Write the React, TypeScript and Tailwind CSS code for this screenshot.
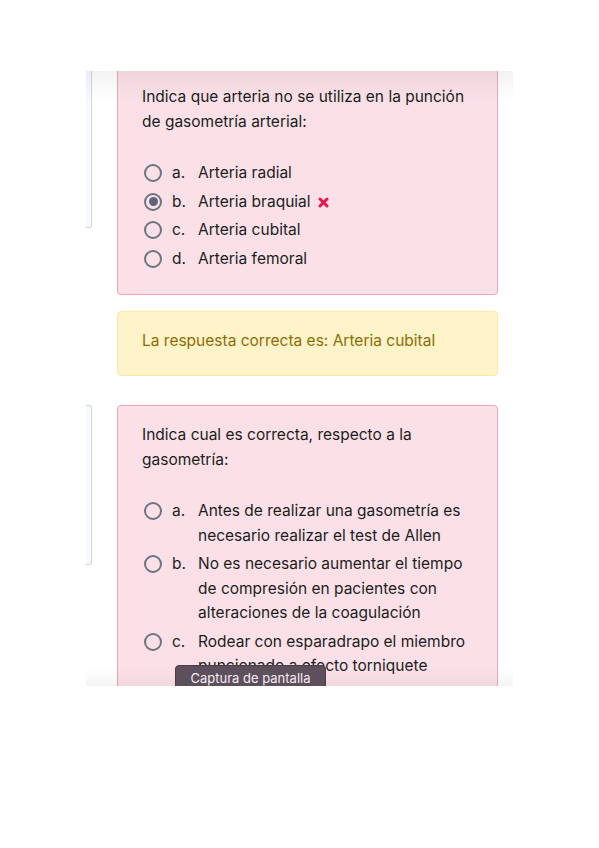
import React from 'react';

type Option = { letter: string; text: string; checked?: boolean; wrong?: boolean };

const q1: Option[] = [
  { letter: 'a.', text: 'Arteria radial' },
  { letter: 'b.', text: 'Arteria braquial', checked: true, wrong: true },
  { letter: 'c.', text: 'Arteria cubital' },
  { letter: 'd.', text: 'Arteria femoral' },
];

const q2: Option[] = [
  { letter: 'a.', text: 'Antes de realizar una gasometría es necesario realizar el test de Allen' },
  { letter: 'b.', text: 'No es necesario aumentar el tiempo de compresión en pacientes con alteraciones de la coagulación' },
  { letter: 'c.', text: 'Rodear con esparadrapo el miembro puncionado a efecto torniquete' },
  { letter: 'd.', text: 'Ninguna de las anteriores es correcta' },
];

function Radio({ checked }: { checked?: boolean }) {
  return (
    <span className="mt-[3px] flex h-[18px] w-[18px] shrink-0 items-center justify-center rounded-full border-[2px] border-[#6b7480] bg-[#fbe1e7]">
      {checked && <span className="h-[9px] w-[9px] rounded-full bg-[#5b667a]" />}
    </span>
  );
}

function Answer({ opt }: { opt: Option }) {
  return (
    <div className="flex items-start pl-[2px]">
      <Radio checked={opt.checked} />
      <span className="ml-[10px] w-[26px] shrink-0">{opt.letter}</span>
      <span className="flex-1 pr-[2px]">
        {opt.text}
        {opt.wrong && (
          <svg className="ml-[7px] inline-block align-[-1px]" width="11" height="11" viewBox="0 0 11 11">
            <path d="M2 2 L9 9 M9 2 L2 9" stroke="#e8174a" strokeWidth="3" strokeLinecap="round" />
          </svg>
        )}
      </span>
    </div>
  );
}

function Question({ text, options, boxH }: { text: string; options: Option[]; boxH: string }) {
  return (
    <div className="flex items-start gap-[25px]">
      <div className={`w-[6px] ${boxH} shrink-0 rounded-r-[3px] border border-l-0 border-[#cdd5e4] bg-[#f8f9fc]`} />
      <div className="w-[381px] rounded-[4px] border border-[#efa6b8] bg-[#fbe1e7] px-[24px] pt-[16px] pb-[23px]">
        <p className="leading-[25px]">{text}</p>
        <div className="mt-[27px] flex flex-col gap-[4px] leading-[24.5px]">
          {options.map((o) => (
            <Answer key={o.letter} opt={o} />
          ))}
        </div>
      </div>
    </div>
  );
}

export default function App() {
  return (
    <div className="h-[848px] w-full overflow-hidden bg-white pt-[71px]" style={{ fontFamily: 'Inter, "Noto Sans", sans-serif' }}>
      <div className="relative ml-[86px] h-[615px] w-[427px] overflow-hidden bg-white text-[15.5px] text-[#1a1d21]">
        <div className="-mt-[4px] flex flex-col">
          <Question
            text="Indica que arteria no se utiliza en la punción de gasometría arterial:"
            options={q1}
            boxH="h-[161px]"
          />
          <div className="ml-[31px] mt-[16px] w-[381px] rounded-[4px] border border-[#fde8a8] bg-[#fff3c9] px-[24px] pt-[16px] pb-[22px] leading-[25px] text-[#8e6c05]">
            La respuesta correcta es: Arteria cubital
          </div>
          <div className="mt-[29px]">
            <Question
              text="Indica cual es correcta, respecto a la gasometría:"
              options={q2}
              boxH="h-[160px]"
            />
          </div>
        </div>
        <div className="pointer-events-none absolute left-0 top-0 h-[30px] w-full bg-gradient-to-b from-black/[0.05] to-transparent" />
        <div className="pointer-events-none absolute bottom-0 left-0 h-[18px] w-full bg-gradient-to-b from-transparent to-black/[0.04]" />
        <div className="absolute left-[89px] top-[594px] flex h-[26px] w-[151px] justify-center rounded-[4px] border border-[#4a3d48] bg-[#5e4f5c] pt-[3px] text-[13px] text-[#f4eef3]">
          Captura de pantalla
        </div>
      </div>
    </div>
  );
}
